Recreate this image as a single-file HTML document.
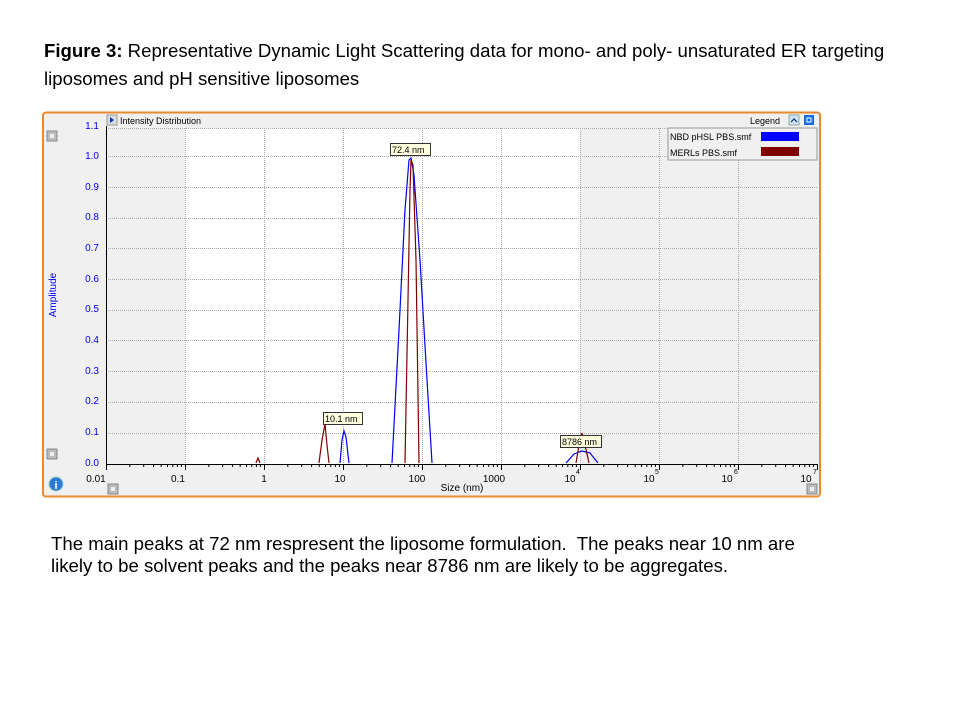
<!DOCTYPE html>
<html><head><meta charset="utf-8"><style>
body{margin:0;width:960px;height:720px;background:#fff;position:relative;font-family:"Liberation Sans",Arial,sans-serif;overflow:hidden}
.t{position:absolute;left:44px;font-size:18.6px;color:#000;line-height:28px;white-space:nowrap}
.b{position:absolute;left:51px;font-size:18.6px;color:#000;line-height:22px;white-space:nowrap}
</style></head><body>
<div class="t" style="top:37px"><b>Figure 3:</b> Representative Dynamic Light Scattering data for mono- and poly- unsaturated ER targeting<br>liposomes and pH sensitive liposomes</div>
<svg width="960" height="720" style="position:absolute;left:0;top:0" font-family="Liberation Sans, Arial, sans-serif">
<defs>
<g id="mt" stroke="#000" stroke-width="1">
<path d="M23.8,464v3M37.7,464v3M47.6,464v3M55.2,464v3M61.5,464v3M66.8,464v3M71.4,464v3M75.4,464v3"/>
</g>
<pattern id="yt" x="0" y="0" width="10" height="6.13" patternUnits="userSpaceOnUse"><path d="M6,0.5h4" stroke="#000"/></pattern>
</defs>
<rect x="43" y="112.5" width="777" height="384" rx="3" fill="#f0f0f0" stroke="#e8892a" stroke-width="2"/>
<rect x="106" y="128" width="711" height="336" fill="#f0f0f0"/>
<rect x="185" y="128" width="395" height="336" fill="#fff"/>
<g stroke="#aaa" stroke-dasharray="1,1" stroke-width="1">
<path d="M106,156.5H817M106,187.5H817M106,218.5H817M106,248.5H817M106,279.5H817M106,310.5H817M106,340.5H817M106,371.5H817M106,402.5H817M106,433.5H817M106,128.5H817"/>
<path d="M185.5,128V464M264.5,128V464M343.5,128V464M422.5,128V464M501.5,128V464M580.5,128V464M659.5,128V464M738.5,128V464"/>
</g>
<rect x="668" y="128" width="149" height="32" fill="#f0f0f0" stroke="#999"/>
<text x="670" y="140" font-size="9">NBD pHSL PBS.smf</text>
<rect x="761" y="132" width="38" height="9" fill="#0000ff"/>
<text x="670" y="156" font-size="9">MERLs PBS.smf</text>
<rect x="761" y="147" width="38" height="9" fill="#800000"/>
<text x="750" y="124" font-size="9">Legend</text>
<rect x="789" y="115" width="10" height="10" fill="#cfe0f8" stroke="#8aa"/>
<path d="M791,122l3,-3l3,3" fill="none" stroke="#036" stroke-width="1.2"/>
<rect x="804" y="115" width="10" height="10" fill="#1a6de0"/><rect x="807" y="118" width="4" height="4" fill="none" stroke="#fff"/>
<rect x="107" y="115" width="10" height="10" fill="#ddd" stroke="#999"/><path d="M110,117l4,3l-4,3z" fill="#0033cc"/>
<text x="120" y="124" font-size="9">Intensity Distribution</text>
<path d="M106.5,126V464" stroke="#000"/>
<rect x="100" y="126" width="6" height="338" fill="url(#yt)"/>
<g fill="#0000ff" font-size="10" text-anchor="end">
<text x="99" y="129">1.1</text><text x="99" y="159">1.0</text><text x="99" y="190">0.9</text><text x="99" y="220">0.8</text><text x="99" y="251">0.7</text><text x="99" y="282">0.6</text><text x="99" y="312">0.5</text><text x="99" y="343">0.4</text><text x="99" y="374">0.3</text><text x="99" y="404">0.2</text><text x="99" y="435">0.1</text><text x="99" y="466">0.0</text>
</g>
<text x="56" y="295" font-size="10" fill="#0000ff" text-anchor="middle" transform="rotate(-90 56 295)">Amplitude</text>
<path d="M106,464.5H818" stroke="#000"/>
<path d="M106.5,464v6M185.5,464v6M264.5,464v6M343.5,464v6M422.5,464v6M501.5,464v6M580.5,464v6M659.5,464v6M738.5,464v6M817.5,464v6" stroke="#000"/>
<use href="#mt" x="106"/><use href="#mt" x="185"/><use href="#mt" x="264"/><use href="#mt" x="343"/><use href="#mt" x="422"/><use href="#mt" x="501"/><use href="#mt" x="580"/><use href="#mt" x="659"/><use href="#mt" x="738"/>
<g font-size="10" text-anchor="middle">
<text x="96" y="482">0.01</text><text x="178" y="482">0.1</text><text x="264" y="482">1</text><text x="340" y="482">10</text><text x="417" y="482">100</text><text x="494" y="482">1000</text>
<text x="570" y="482">10</text><text x="649" y="482">10</text><text x="727" y="482">10</text><text x="806" y="482">10</text>
</g>
<g font-size="7"><text x="576" y="474">4</text><text x="655" y="474">5</text><text x="734" y="474">6</text><text x="813" y="474">7</text></g>
<text x="462" y="491" font-size="10" text-anchor="middle">Size (nm)</text>
<g fill="none" stroke-width="1.2">
<path d="M392,463L399,330L405,210L409,160L411,158L414,175L420,260L427,380L432,463" stroke="#0000ff"/>
<path d="M340,463L342,440L344,431L346,437L349,463" stroke="#0000ff"/>
<path d="M566,463L574,454L582,451L590,453L598,463" stroke="#0000ff"/>
<path d="M405,463L408,300L410,190L411,160L413,165L416,260L419,463" stroke="#800000"/>
<path d="M319,463L322,440L325,424L327,445L329,463" stroke="#800000"/>
<path d="M256,463L258,458L260,463" stroke="#800000"/>
<path d="M576,463L579,445L582,433L585,445L589,463" stroke="#800000"/>
</g>
<g font-size="9">
<rect x="390.5" y="143.5" width="40" height="12" fill="#ffffe0" stroke="#333"/><text x="392" y="153">72.4 nm</text>
<rect x="323.5" y="412.5" width="39" height="12" fill="#ffffe0" stroke="#333"/><text x="325" y="422">10.1 nm</text>
<rect x="560.5" y="435.5" width="41" height="12" fill="#ffffe0" stroke="#333"/><text x="562" y="445">8786 nm</text>
</g>
<g fill="#bbb" stroke="#888">
<rect x="47" y="131" width="10" height="10"/><rect x="47" y="449" width="10" height="10"/><rect x="108" y="484" width="10" height="10"/><rect x="807" y="484" width="10" height="10"/>
</g>
<g fill="#eee"><rect x="50" y="134" width="4" height="4"/><rect x="50" y="452" width="4" height="4"/><rect x="111" y="487" width="4" height="4"/><rect x="810" y="487" width="4" height="4"/></g>
<circle cx="56" cy="484" r="7" fill="#2a7ad6" stroke="#9cc"/><text x="56" y="489" font-size="11" font-weight="bold" fill="#fff" text-anchor="middle">i</text>
</svg>
<div class="b" style="top:533px">The main peaks at 72 nm respresent the liposome formulation.&nbsp; The peaks near 10 nm are<br>likely to be solvent peaks and the peaks near 8786 nm are likely to be aggregates.</div>
</body></html>
